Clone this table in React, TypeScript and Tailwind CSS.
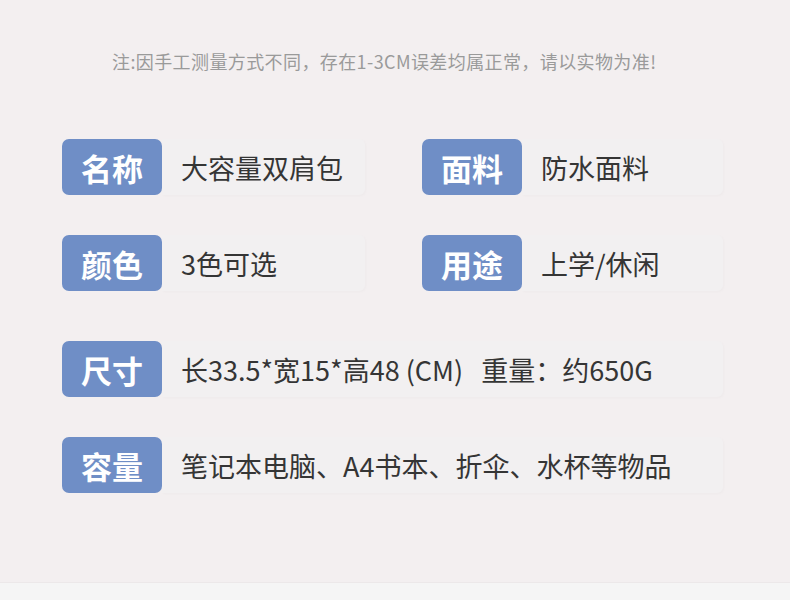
import React from "react";

const FONT = { fontFamily: '"Noto Sans CJK SC", "Noto Sans", sans-serif' };

function Field({ label, value, wide }: { label: string; value: string; wide?: boolean }) {
  return (
    <div className={"flex h-[56px] " + (wide ? "col-span-2 w-[661px]" : "")}>
      <div className="flex w-[100px] shrink-0 items-center justify-center rounded-[7px] bg-[#6f8ec6] text-[31px] font-bold leading-none text-white">
        {label}
      </div>
      <div className="flex flex-1 items-center whitespace-pre rounded-r-[6px] bg-[#f2f0f1] pl-[19px] text-[27px] leading-none text-[#353535] shadow-[1px_1px_3px_rgba(0,0,0,0.025)]">
        {value}
      </div>
    </div>
  );
}

export default function App() {
  return (
    <div style={FONT} className="w-[790px] h-[600px] bg-[#f5f5f5]">
      <div className="h-[583px] bg-[#f3eff0] border-b border-[#ece8e9]">
        <div className="pt-[49px] pl-[112px] text-[18px] leading-[24px] tracking-[0.4px] text-[#9a9a9a]">
          注:因手工测量方式不同，存在1-3CM误差均属正常，请以实物为准!
        </div>
        <div className="mt-[66px] px-[62px]">
          <div className="grid grid-cols-[303px_301px] gap-x-[57px]">
            <Field label="名称" value="大容量双肩包" />
            <Field label="面料" value="防水面料" />
          </div>
          <div className="mt-[40px] grid grid-cols-[303px_301px] gap-x-[57px]">
            <Field label="颜色" value="3色可选" />
            <Field label="用途" value="上学/休闲" />
          </div>
          <div className="mt-[50px]">
            <Field wide label="尺寸" value="长33.5*宽15*高48 (CM)   重量：约650G" />
          </div>
          <div className="mt-[40px]">
            <Field wide label="容量" value="笔记本电脑、A4书本、折伞、水杯等物品" />
          </div>
        </div>
      </div>
    </div>
  );
}
